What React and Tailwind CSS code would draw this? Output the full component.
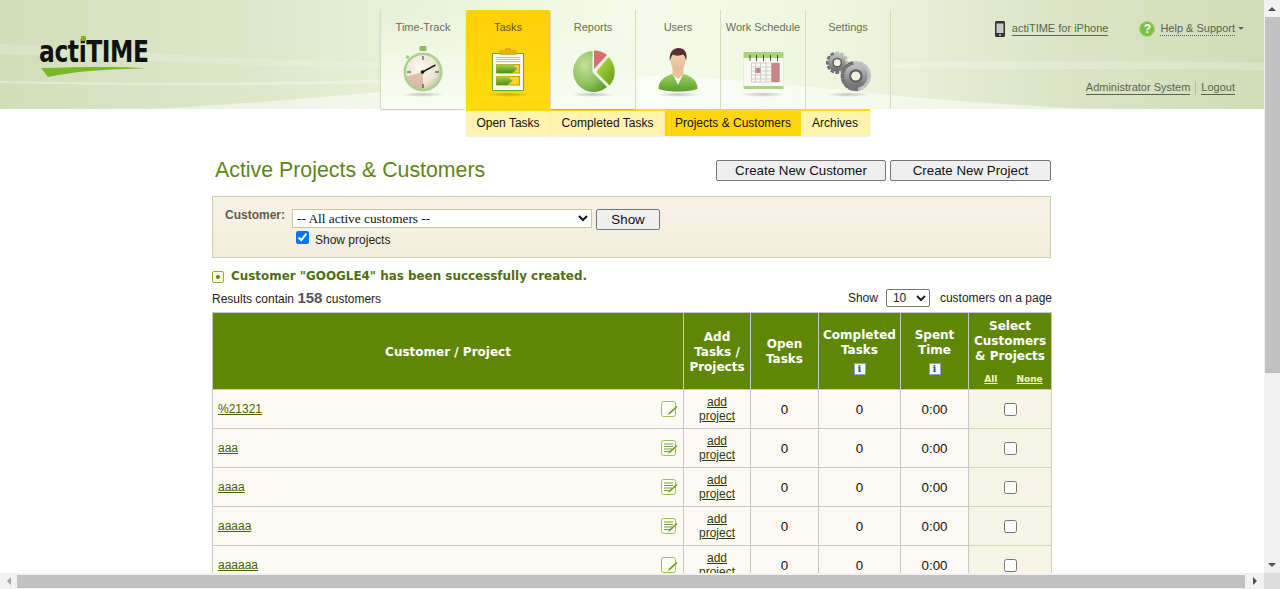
import React from 'react';

const arial = { fontFamily: '"Liberation Sans", Arial, sans-serif' };

function Defs() {
  return (
    <svg width="0" height="0" className="absolute">
      <defs>
        <radialGradient id="faceGrad" cx="0.42" cy="0.38" r="0.7">
          <stop offset="0" stopColor="#fbf9f2" />
          <stop offset="0.65" stopColor="#ece6d4" />
          <stop offset="1" stopColor="#c9c3a8" />
        </radialGradient>
        <linearGradient id="greenBar" x1="0" y1="0" x2="0" y2="1">
          <stop offset="0" stopColor="#a5d24a" />
          <stop offset="1" stopColor="#4c920c" />
        </linearGradient>
        <radialGradient id="pieGreen" cx="0.35" cy="0.35" r="0.8">
          <stop offset="0" stopColor="#c4e09c" />
          <stop offset="0.6" stopColor="#8cc05e" />
          <stop offset="1" stopColor="#569c26" />
        </radialGradient>
        <linearGradient id="pieBright" x1="0" y1="0" x2="1" y2="1">
          <stop offset="0" stopColor="#c3e04f" />
          <stop offset="1" stopColor="#5a9c10" />
        </linearGradient>
        <linearGradient id="suit" x1="0" y1="0" x2="0" y2="1">
          <stop offset="0" stopColor="#9fd063" />
          <stop offset="1" stopColor="#5b9e2a" />
        </linearGradient>
        <linearGradient id="skin" x1="0" y1="0" x2="0" y2="1">
          <stop offset="0" stopColor="#f6d9bd" />
          <stop offset="1" stopColor="#e5b892" />
        </linearGradient>
        <linearGradient id="gear" x1="0" y1="0" x2="0" y2="1">
          <stop offset="0" stopColor="#c4c4c4" />
          <stop offset="1" stopColor="#6d6d6d" />
        </linearGradient>
        <radialGradient id="shadow">
          <stop offset="0" stopColor="#000" stopOpacity="0.22" />
          <stop offset="1" stopColor="#000" stopOpacity="0" />
        </radialGradient>
      </defs>
    </svg>
  );
}

function Gear({ cx, cy, r, teeth }) {
  const spokes = [];
  for (let i = 0; i < teeth; i++) {
    spokes.push(
      <rect
        key={i}
        x={cx - r * 0.2}
        y={cy - r * 1.12}
        width={r * 0.4}
        height={r * 2.24}
        rx="0.8"
        fill="url(#gear)"
        transform={`rotate(${(i * 180) / teeth} ${cx} ${cy})`}
      />
    );
  }
  return (
    <g>
      {spokes}
      <circle cx={cx} cy={cy} r={r * 0.86} fill="url(#gear)" />
      <circle cx={cx} cy={cy} r={r * 0.5} fill="#5f5f5f" />
      <circle cx={cx} cy={cy} r={r * 0.34} fill="#eef3e0" />
    </g>
  );
}

function TabIcon({ name }) {
  // every drawing sits in a 60x54 box, its top at y=44 of the page
  let body = null;
  if (name === 'watch') {
    body = (
      <g>
        <rect x="26.500" y="2" width="7" height="5" rx="1" fill="#8dbb66" />
        <circle cx="14.500" cy="13" r="1.800" fill="#a6cc85" />
        <circle cx="30" cy="28" r="19.500" fill="#a9d28a" />
        <circle cx="30" cy="28" r="17" fill="url(#faceGrad)" />
        <path d="M30 45A17 17 0 0 1 13.600 32.500L30 28Z" fill="#d9a998" opacity="0.7" />
        <path d="M30 12v4M30 40v4M14 28h4M42 28h4" stroke="#333" strokeWidth="1" />
        <path d="M29.500 28L42.500 21" stroke="#222" strokeWidth="1.600" />
        <circle cx="29.500" cy="28" r="1.800" fill="#111" />
      </g>
    );
  } else if (name === 'tasks') {
    body = (
      <g>
        <rect x="14.500" y="9.500" width="31" height="37" fill="#f8f9ef" stroke="#6fa63a" strokeWidth="1" />
        <path d="M22 9V6.500h5.500V4.500h5v2H38V9v1.500H22Z" fill="#e2b30e" stroke="#c49a08" strokeWidth="0.5" />
        <path d="M18 13.500h24M18 15.500h24M18 17.500h24" stroke="#aaa" strokeWidth="0.7" />
        <rect x="18.500" y="20.500" width="23" height="8.500" fill="#f7d434" stroke="#d39f07" strokeWidth="1" />
        <path d="M18.500 20.500h16l5 4.250-5 4.250h-16Z" fill="url(#greenBar)" />
        <rect x="18.500" y="32.500" width="23" height="8.500" fill="#f7d434" stroke="#d39f07" strokeWidth="1" />
        <path d="M18.500 32.500h11l5 4.250-5 4.250h-11Z" fill="url(#greenBar)" />
      </g>
    );
  } else if (name === 'pie') {
    body = (
      <g>
        <path d="M29.500 7A20.500 20.500 0 1 0 44 43L29.500 28Z" fill="url(#pieGreen)" />
        <path d="M31 6.500A20.500 20.500 0 0 1 44 11L31 25Z" fill="#d96c6c" />
        <path d="M45.500 13A20.500 20.500 0 0 1 46.500 41.500L33 28Z" fill="url(#pieBright)" />
      </g>
    );
  } else if (name === 'user') {
    body = (
      <g>
        <path d="M10.500 45c0-8 5-12 13-15l6.500 3 6.500-3c8 3 13 7 13 15-6 2-13 2.500-19.500 2.500S16.500 47 10.500 45Z" fill="url(#suit)" />
        <path d="M25 30l5 11 5-11-5 2Z" fill="#fff" />
        <path d="M24.500 22h11v8l-5.500 5-5.500-5Z" fill="#e8c09c" />
        <ellipse cx="30" cy="16" rx="7.500" ry="11" fill="url(#skin)" />
        <path d="M21.800 17c-1-8 3-13 8.700-13s9.500 4.500 7.700 12.500c-1-3-1.700-5-3.200-6-3 1.500-8 1.500-10 0-1.500 1.500-2.200 3.500-3.200 6.500Z" fill="#5a3030" />
      </g>
    );
  } else if (name === 'calendar') {
    body = (
      <g>
        <rect x="10.500" y="8" width="40" height="37" rx="1" fill="#a9d37f" />
        <rect x="10.500" y="14" width="40" height="28" fill="#f9f9f4" />
        <path d="M17 11v6M23.500 11v6M30.500 11v6M37.500 11v6M44.500 11v6" stroke="#222" strokeWidth="0.8" />
        <path d="M18.500 19h28M18.500 23h28M18.500 27h28M18.500 31h28M18.500 35h28M18.500 38h28M18.500 19v19M22.500 19v19M27.500 19v19M33 19v19M38.500 19v19M46.500 19v19" stroke="#bcb4b4" strokeWidth="0.6" fill="none" />
        <rect x="22.500" y="24" width="5" height="5" fill="#c88585" />
        <rect x="38.500" y="19" width="8" height="19" fill="#c88585" />
      </g>
    );
  } else if (name === 'gears') {
    body = (
      <g>
        <Gear cx={19.200} cy={18.700} r={10} teeth={6} />
        <Gear cx={37.800} cy={32} r={13.500} teeth={8} />
      </g>
    );
  }
  return (
    <svg width="60" height="54" viewBox="0 0 60 54">
      <ellipse cx="30" cy="50.500" rx="22" ry="2.500" fill="url(#shadow)" />
      {body}
    </svg>
  );
}

function Tab({ label, icon, kind }) {
  const cls = {
    active: 'bg-gradient-to-b from-[#ffcf0a] to-[#ffdb0f] bg-clip-padding border-l border-transparent text-[#5b5a1e] rounded-t-[2px]',
    near: 'bg-gradient-to-b from-transparent via-[#f2f9e8] to-[#f9fcf3] border-l border-[#d2e0bd] text-[#66705c] rounded-b-[2px] shadow-[0_1px_1px_rgba(120,130,100,0.45)]',
    plain: 'border-l border-[#cfe0b8] text-[#66705c]',
  }[kind];
  return (
    <div className={`w-[85px] h-[99px] flex flex-col items-center text-[11px] leading-[14px] ${cls}`}>
      <span className="mt-[10px] whitespace-nowrap">{label}</span>
      <span className="mt-[10px] flex">
        <TabIcon name={icon} />
      </span>
    </div>
  );
}

function HeaderWave() {
  return (
    <svg className="absolute inset-0" width="1264" height="109" viewBox="0 0 1264 109">
      <defs>
        <linearGradient id="headBg" x1="0" y1="0" x2="1" y2="0">
          <stop offset="0" stopColor="#d1deba" />
          <stop offset="0.2" stopColor="#dde8ca" />
          <stop offset="0.36" stopColor="#eaf4db" />
          <stop offset="0.5" stopColor="#f4fbea" />
          <stop offset="0.66" stopColor="#eef6e0" />
          <stop offset="0.82" stopColor="#dce6c8" />
          <stop offset="1" stopColor="#d0dcb8" />
        </linearGradient>
      </defs>
      <rect width="1264" height="109" fill="url(#headBg)" />
      <path d="M0 44C120 50 250 62 400 62V68C250 68 120 58 0 54Z" fill="#fff" opacity="0.16" />
      <path d="M0 81C150 84 300 84 460 76V80C300 87 150 86 0 83Z" fill="#fff" opacity="0.35" />
      <path d="M890 62C1000 60 1150 62 1264 62V70C1150 68 1000 70 890 68Z" fill="#fff" opacity="0.22" />
      <path d="M150 109C330 100 470 80 640 76C760 76 860 98 1090 109Z" fill="#fff" opacity="0.5" />
    </svg>
  );
}

function Logo() {
  return (
    <div className="relative ml-[39px] mt-[34px] w-[110px] h-[46px] shrink-0">
      <div
        className="origin-left scale-x-[0.84] text-[31px] leading-[34px] font-bold text-[#111] whitespace-nowrap tracking-[-0.5px]"
        style={{ fontFamily: '"DejaVu Sans Condensed", "DejaVu Sans", sans-serif' }}
      >
        actiTIME
      </div>
      <span className="absolute left-[42px] top-[2px] w-[5px] h-[5px] bg-[#7ab51d]" />
      <svg className="absolute left-[1px] top-[32px]" width="108" height="12" viewBox="0 0 108 12">
        <path d="M1 2C40 1 80 0 107 2.500C70 3 35 5 8 11Z" fill="#7ab829" />
      </svg>
    </div>
  );
}

function PhoneIcon() {
  return (
    <svg width="10" height="16" viewBox="0 0 10 16">
      <rect width="10" height="16" rx="1.500" fill="#333" />
      <rect x="1.500" y="2.500" width="7" height="9.500" fill="#c9c9c9" />
      <circle cx="5" cy="14" r="1" fill="#ddd" />
    </svg>
  );
}

function Header() {
  return (
    <div className="relative h-[109px] shrink-0">
      <HeaderWave />
      <div className="relative flex h-[109px]">
        <Logo />
        <div className="flex ml-[231px] pt-[10px] h-[109px] w-[511px] shrink-0">
          <Tab label="Time-Track" icon="watch" kind="near" />
          <Tab label="Tasks" icon="tasks" kind="active" />
          <Tab label="Reports" icon="pie" kind="near" />
          <Tab label="Users" icon="user" kind="plain" />
          <Tab label="Work Schedule" icon="calendar" kind="plain" />
          <Tab label="Settings" icon="gears" kind="plain" />
          <div className="w-px h-[99px] bg-[#cfe0b8]" />
        </div>
        <div className="flex-1 flex flex-col items-end text-[11px] text-[#5a6450]">
          <div className="flex items-center mt-[20px] pr-[20px] h-[17px]">
            <PhoneIcon />
            <a className="ml-[7px] leading-[13px] border-b border-[#5a6450]">actiTIME for iPhone</a>
            <span className="ml-[31px] w-[16px] h-[16px] rounded-full bg-[#7cc242] border border-[#a4d97a] text-white text-[12px] font-bold flex items-center justify-center">?</span>
            <a className="ml-[5px] leading-[13px] border-b border-dotted border-[#5a6450]">Help &amp; Support</a>
            <span className="ml-[3px] w-0 h-0 border-x-[3px] border-x-transparent border-t-[3px] border-t-[#666]" />
          </div>
          <div className="flex items-center mt-[43px] pr-[29px] h-[16px]">
            <a className="leading-[13px] border-b border-[#5a6450]">Administrator System</a>
            <span className="mx-[5px] w-px h-[14px] bg-[#b5bfa5]" />
            <a className="leading-[13px] border-b border-[#5a6450]">Logout</a>
          </div>
        </div>
      </div>
    </div>
  );
}

function SubNav() {
  const items = [
    { label: 'Open Tasks', w: 'w-[85px]' },
    { label: 'Completed Tasks', w: 'w-[114px]' },
    { label: 'Projects & Customers', w: 'w-[136px]', active: true },
    { label: 'Archives', w: 'w-[69px]' },
  ];
  return (
    <div className="flex ml-[466px] h-[27px] border-t-2 border-[#ffd60f] shadow-[0_1px_1px_rgba(0,0,0,0.06)] w-fit">
      {items.map((it) => (
        <div
          key={it.label}
          className={`${it.w} h-[25px] pb-[2px] flex items-center justify-center text-[12px] text-[#111] whitespace-nowrap ${
            it.active ? 'bg-[#ffd60f]' : 'bg-[#fff3b0] border-r border-[#fdeca0]'
          }`}
        >
          {it.label}
        </div>
      ))}
    </div>
  );
}

function PageButton({ className, children }) {
  return (
    <button className={`h-[21px] bg-[#efefef] border border-[#767676] rounded-[2px] text-[13.333px] leading-[17px] text-[#111] ${className}`}>
      {children}
    </button>
  );
}

function NoteIcon({ lined }) {
  return (
    <svg width="17" height="17" viewBox="0 0 17 17">
      <rect x="0.500" y="0.500" width="14" height="15" rx="2" fill="#fdfdf4" stroke="#9cc05a" />
      {lined && <path d="M3 4h9M3 6.500h9M3 9h8M3 11.500h5" stroke="#7d9a55" strokeWidth="1" />}
      <path d="M7 14l1-2.500L15.500 5l1 1-7 6.500Z" fill="#6f9d1d" />
    </svg>
  );
}

function InfoIcon() {
  return (
    <span
      className="inline-flex w-[12px] h-[12px] items-center justify-center bg-white border border-[#8aa4c8] text-[#2a4f8a] text-[10px] leading-none font-bold"
      style={{ fontFamily: '"DejaVu Serif", serif' }}
    >
      i
    </span>
  );
}

const verdana = { fontFamily: '"DejaVu Sans", Verdana, sans-serif' };

function HeadCell({ className = '', children }) {
  return (
    <th
      className={`bg-[#5f8705] border-x border-[#c8c8c8] text-white text-[12px] leading-[15px] font-bold text-center align-middle p-0 ${className}`}
      style={verdana}
    >
      {children}
    </th>
  );
}

const rows = [
  { name: '%21321', lined: false },
  { name: 'aaa', lined: true },
  { name: 'aaaa', lined: true },
  { name: 'aaaaa', lined: true },
  { name: 'aaaaaa', lined: false },
];

function ProjectsTable() {
  return (
    <table className="table-fixed w-[839px] border-collapse mt-[4px]" style={arial}>
      <colgroup>
        <col className="w-[471px]" />
        <col className="w-[67px]" />
        <col className="w-[68px]" />
        <col className="w-[82px]" />
        <col className="w-[68px]" />
        <col className="w-[83px]" />
      </colgroup>
      <thead>
        <tr className="h-[77px] border-y border-[#c8c8c8]">
          <HeadCell className="pt-[2px]">Customer / Project</HeadCell>
          <HeadCell className="pt-[2px]">
            Add
            <br />
            Tasks /
            <br />
            Projects
          </HeadCell>
          <HeadCell className="pt-[2px]">
            Open
            <br />
            Tasks
          </HeadCell>
          <HeadCell>
            <div>
              Completed
              <br />
              Tasks
            </div>
            <div className="flex justify-center mt-[5px]">
              <InfoIcon />
            </div>
          </HeadCell>
          <HeadCell>
            <div>
              Spent
              <br />
              Time
            </div>
            <div className="flex justify-center mt-[5px]">
              <InfoIcon />
            </div>
          </HeadCell>
          <HeadCell className="pt-[1px]">
            <div>
              Select
              <br />
              Customers
              <br />
              &amp; Projects
            </div>
            <div className="flex justify-center gap-[19px] mt-[9px] pl-[7px] text-[9px] leading-[12px] text-[#f2f8c8] underline">
              <span>All</span>
              <span>None</span>
            </div>
          </HeadCell>
        </tr>
      </thead>
      <tbody>
        {rows.map((row) => (
          <tr key={row.name} className="h-[39px] border-b border-[#c8c8c8] text-[#111]">
            <td className="bg-[#fdfaf3] border-x border-[#c8c8c8] px-[5px] p-0">
              <div className="flex items-center justify-between">
                <a className="text-[12px] underline text-[#456400]">{row.name}</a>
                <span className="flex mt-px">
                  <NoteIcon lined={row.lined} />
                </span>
              </div>
            </td>
            <td className="bg-[#fdfaf3] border-x border-[#c8c8c8] text-center text-[12px] leading-[14px] underline text-[#2c3a10] p-0">
              add
              <br />
              project
            </td>
            <td className="bg-[#fdfaf3] border-x border-[#c8c8c8] text-center text-[13.333px] pt-[2px]">0</td>
            <td className="bg-[#fdfaf3] border-x border-[#c8c8c8] text-center text-[13.333px] pt-[2px]">0</td>
            <td className="bg-[#fdfaf3] border-x border-[#c8c8c8] text-center text-[13.333px] pt-[2px]">0:00</td>
            <td className="bg-[#f6f4e6] border-x border-b border-[#d8d2a8] text-center p-0">
              <input type="checkbox" className="w-[13px] h-[13px] align-middle" />
            </td>
          </tr>
        ))}
      </tbody>
    </table>
  );
}

function Main() {
  return (
    <div className="ml-[212px] w-[839px]" style={arial}>
      <div className="flex items-center justify-between mt-[24px] h-[21px]">
        <h1 className="ml-[3px] text-[21.333px] leading-[21px] text-[#5f8519]">Active Projects &amp; Customers</h1>
        <div className="flex gap-[4px]">
          <PageButton className="w-[170px]">Create New Customer</PageButton>
          <PageButton className="w-[161px]">Create New Project</PageButton>
        </div>
      </div>
      <div className="mt-[15px] h-[62px] bg-gradient-to-b from-[#f6f2e7] to-[#f2eedd] border border-[#d5cfa9] pl-[12px] pt-[12px] flex">
        <span className="text-[12px] font-bold text-[#5e5e4c] leading-[14px] mt-[-1px]">Customer:</span>
        <div className="ml-[7px]">
          <div className="flex gap-[4px]">
            <select
              className="w-[300px] h-[19px] bg-white border border-[#cdc7a0] text-[13.333px] leading-none text-[#111]"
              style={{ fontFamily: '"Liberation Serif", serif' }}
            >
              <option>-- All active customers --</option>
            </select>
            <PageButton className="w-[64px]">Show</PageButton>
          </div>
          <label className="flex items-start mt-[1px] text-[12px] text-[#222] leading-[14px]">
            <input type="checkbox" defaultChecked className="ml-[4px] w-[13px] h-[13px]" />
            <span className="ml-[6px] mt-[2px]">Show projects</span>
          </label>
        </div>
      </div>
      <div className="flex items-center mt-[11px] h-[15px]">
        <span className="w-[12px] h-[12px] rounded-[2px] border border-[#8fad3c] bg-[#f8fae8] flex items-center justify-center">
          <span className="w-[4px] h-[4px] rounded-full bg-[#5f8705]" />
        </span>
        <span className="ml-[7px] text-[11.930px] font-bold text-[#4f6f10]" style={verdana}>
          Customer "GOOGLE4" has been successfully created.
        </span>
      </div>
      <div className="flex items-center justify-between mt-[4px] h-[20px] text-[12px] text-[#222]">
        <span>
          Results contain <b className="text-[15px] text-[#555]">158</b> customers
        </span>
        <span className="flex items-center mr-[-1px]">
          Show
          <select className="ml-[8px] w-[44px] h-[18px] bg-white border border-[#767676] rounded-[2px] text-[12px] pl-[2px]">
            <option>10</option>
          </select>
          <span className="ml-[10px]">customers on a page</span>
        </span>
      </div>
      <ProjectsTable />
    </div>
  );
}

function Arrow({ dir }) {
  const shape = {
    up: 'border-x-[4px] border-x-transparent border-b-[4px] border-b-[#505050]',
    down: 'border-x-[4px] border-x-transparent border-t-[4px] border-t-[#505050]',
    left: 'border-y-[4px] border-y-transparent border-r-[4px] border-r-[#a3a3a3]',
    right: 'border-y-[4px] border-y-transparent border-l-[4px] border-l-[#505050]',
  }[dir];
  return <span className={`w-0 h-0 ${shape}`} />;
}

export default function App() {
  return (
    <div className="flex w-[1280px] h-[589px] overflow-hidden bg-white">
      <Defs />
      <div className="w-[1264px] flex flex-col" style={arial}>
        <div className="h-[573px] overflow-hidden">
          <Header />
          <SubNav />
          <Main />
        </div>
        <div className="h-[16px] bg-[#f1f1f1] flex items-center">
          <span className="w-[17px] flex justify-center"><Arrow dir="left" /></span>
          <span className="w-[1228px] h-[13px] bg-[#c1c1c1]" />
          <span className="w-[19px] flex justify-center"><Arrow dir="right" /></span>
        </div>
      </div>
      <div className="w-[16px] flex flex-col bg-[#f1f1f1]">
        <span className="h-[17px] flex items-center justify-center"><Arrow dir="up" /></span>
        <span className="h-[356px] mx-auto w-[15px] bg-[#c1c1c1]" />
        <span className="flex-1" />
        <span className="h-[17px] flex items-center justify-center"><Arrow dir="down" /></span>
        <span className="h-[16px] bg-[#dcdcdc]" />
      </div>
    </div>
  );
}
